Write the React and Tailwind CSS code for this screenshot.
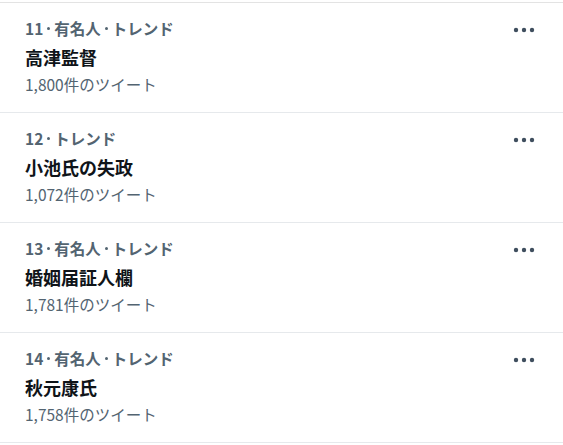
import React from "react";

const items = [
  { n: "11", cat: "有名人", title: "高津監督", count: "1,800件のツイート" },
  { n: "12", cat: null, title: "小池氏の失政", count: "1,072件のツイート" },
  { n: "13", cat: "有名人", title: "婚姻届証人欄", count: "1,781件のツイート" },
  { n: "14", cat: "有名人", title: "秋元康氏", count: "1,758件のツイート" },
];

function Dots() {
  return (
    <svg width="24" height="8" viewBox="0 0 24 8" className="text-[#3f4e5e]">
      <circle cx="4" cy="4" r="2.2" fill="currentColor" />
      <circle cx="12" cy="4" r="2.2" fill="currentColor" />
      <circle cx="20" cy="4" r="2.2" fill="currentColor" />
    </svg>
  );
}

function Sep() {
  return (
    <span className="mx-[4px] w-[3px] h-[3px] rounded-full bg-[#536471]" />
  );
}

export default function App() {
  return (
    <div
      className="w-[563px] h-[445px] bg-white overflow-hidden pt-[2px]"
      style={{ fontFamily: '"Noto Sans CJK JP", "Noto Sans", sans-serif' }}
    >
      <div className="border-t border-[#e3e3e3]">
        {items.map((it, i) => (
          <div
            key={i}
            className="flex h-[110px] border-b-[1.5px] border-[#e6e9ec] pl-[25px] pr-[27px]"
          >
            <div className="flex-1 pt-[15px]">
              <div className="flex items-center h-[20px] text-[15.5px] leading-[20px] font-semibold text-[#536471] whitespace-nowrap">
                <span>{it.n}</span>
                <Sep />
                {it.cat && (
                  <>
                    <span>{it.cat}</span>
                    <Sep />
                  </>
                )}
                <span>トレンド</span>
              </div>
              <div className="mt-[6px] text-[18px] leading-[26px] font-bold text-[#0f1419] whitespace-nowrap">
                {it.title}
              </div>
              <div className="mt-[4px] text-[15.5px] leading-[20px] text-[#536471] whitespace-nowrap">
                {it.count}
              </div>
            </div>
            <div className="pt-[23px]">
              <Dots />
            </div>
          </div>
        ))}
      </div>
    </div>
  );
}
